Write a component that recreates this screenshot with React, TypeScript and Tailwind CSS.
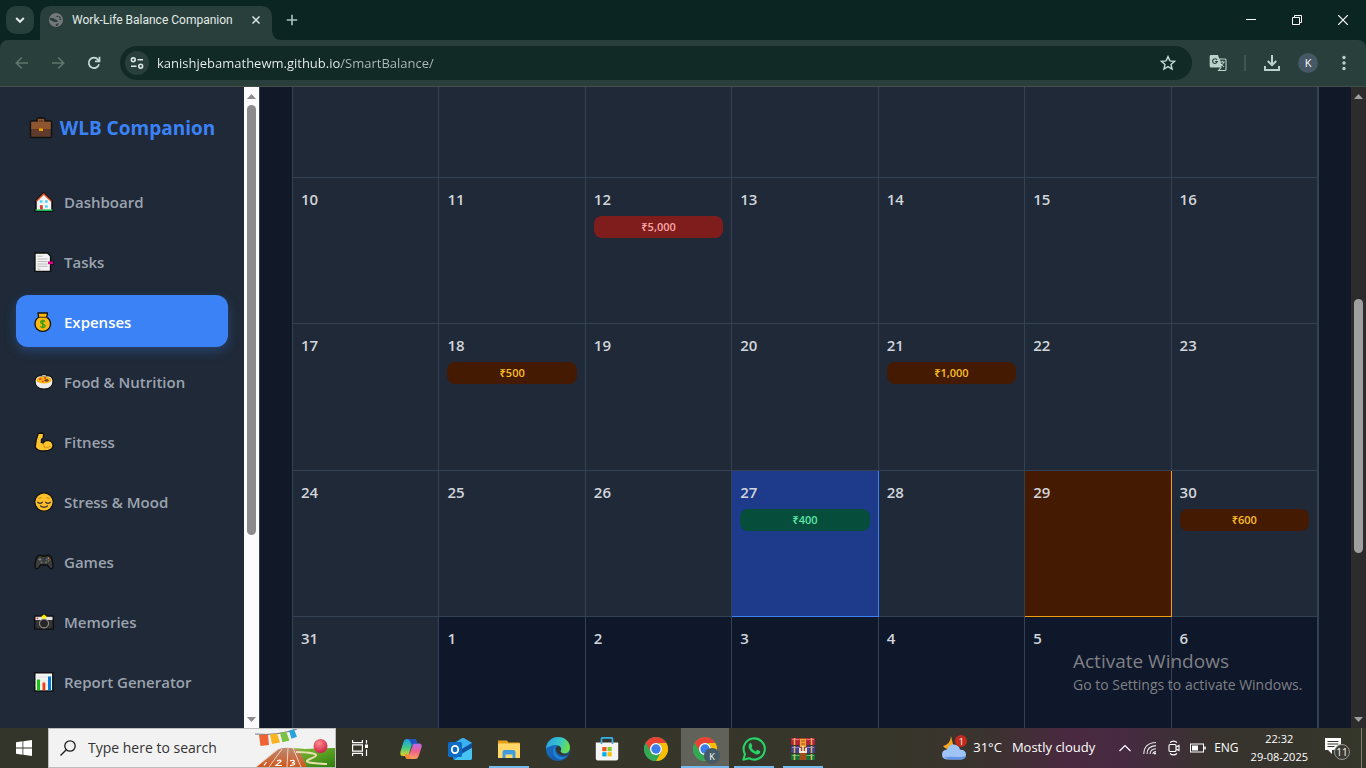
import React from "react";

type Tone = "red" | "amber" | "green";
type Day = {
  n: number | null;
  amount?: string;
  tone?: Tone;
  kind?: "today" | "selected" | "outside";
};

const weeks: Day[][] = [
  [10, 11, 12, 13, 14, 15, 16].map((n) => (n === 12 ? { n, amount: "₹5,000", tone: "red" as Tone } : { n })),
  [17, 18, 19, 20, 21, 22, 23].map((n) =>
    n === 18
      ? { n, amount: "₹500", tone: "amber" as Tone }
      : n === 21
        ? { n, amount: "₹1,000", tone: "amber" as Tone }
        : { n },
  ),
  [
    { n: 24 },
    { n: 25 },
    { n: 26 },
    { n: 27, amount: "₹400", tone: "green", kind: "selected" },
    { n: 28 },
    { n: 29, kind: "today" },
    { n: 30, amount: "₹600", tone: "amber" },
  ],
  [
    { n: 31 },
    { n: 1, kind: "outside" },
    { n: 2, kind: "outside" },
    { n: 3, kind: "outside" },
    { n: 4, kind: "outside" },
    { n: 5, kind: "outside" },
    { n: 6, kind: "outside" },
  ],
];

const chipTone: Record<Tone, string> = {
  red: "bg-[#7f1d1d] text-[#fca5a5]",
  amber: "bg-[#451a03] text-[#fbbf24]",
  green: "bg-[#064e3b] text-[#5ee6a8]",
};

const cellKind = {
  normal: "bg-[#1f2937] border-[#334155]",
  outside: "bg-[#0f172a] border-[#334155]",
  selected: "bg-[#1e3a8a] border-[#3b82f6]",
  today: "bg-[#451a03] border-[#f59e0b]",
};

/* ---------- sidebar icons ---------- */

const Briefcase = () => (
  <svg viewBox="0 0 24 24" className="size-6 shrink-0">
    <path d="M8 5V3.500Q8 2 9.500 2h5Q16 2 16 3.500V5h5.500q1 0 1 1v14.500q0 1-1 1h-19q-1 0-1-1V6q0-1 1-1z" fill="#603a2c" stroke="#111" strokeWidth="1.400" />
    <path d="M2.300 5.800h19.400V13H2.300z" fill="#8e562e" />
    <path d="M9.500 5.500V3.600h5v1.900" fill="none" stroke="#8e562e" strokeWidth="1.300" />
    <rect x="10" y="12.500" width="4" height="2.500" fill="#eaa300" />
  </svg>
);

const House = () => (
  <svg viewBox="0 0 20 20" className="size-5">
    <path d="M9.500 0.800 18 9v8.500h.7v1.800H1v-1.800h1V9z" fill="#f4f4f4" stroke="#0d0d0d" strokeWidth="1.500" strokeLinejoin="round" />
    <path d="M2.500 9.300 9.700 2l7.500 7.300" fill="none" stroke="#e8532b" strokeWidth="1.500" />
    <path d="M1.500 18.200h17" stroke="#1db954" strokeWidth="1.600" />
    <path d="M5.800 8.300h2.700v2.500H5.800zM11 8.300h2.700v2.500H11zM11 13.200h2.700v2.500H11z" fill="#4fd2f2" />
    <path d="M6 13.200h2.800v4.300H6z" fill="#e23b22" />
  </svg>
);

const Tabs = () => (
  <svg viewBox="0 0 20 20" className="size-5">
    <path d="M1 1h12.500L16.500 4v5.300h2.800v3h-2.800v7H1z" fill="#f3f3f3" stroke="#0d0d0d" strokeWidth="1.300" />
    <path d="M3.500 4.200h5M3.500 7h10M3.500 9.500h10M3.500 12h10M3.500 14.300h10M3.500 17h3" stroke="#b9b9b9" strokeWidth="1" />
    <path d="M14 9.500h5v2.700h-5z" fill="#e3008c" />
  </svg>
);

const MoneyBag = () => (
  <svg viewBox="0 0 20 20" className="size-5">
    <path d="M4 1h9.500l-.8 4.300C15 6.500 16.500 9 16.500 12c0 4.200-3.300 7.300-7.800 7.300S1 16.200 1 12c0-3 1.500-5.500 3.700-6.700z" fill="#fdb913" stroke="#111" strokeWidth="1.300" strokeLinejoin="round" />
    <path d="M4.800 5.300h7.800" stroke="#6b4a1c" strokeWidth="1.300" />
    <path d="M11.200 9.600C10.500 8.500 6.600 8.200 6.600 10.300c0 2.400 4.600 1.200 4.600 3.500 0 2.200-3.800 2-4.900.6M8.800 7.600v9" fill="none" stroke="#2e9b1b" strokeWidth="1.300" />
  </svg>
);

const Food = () => (
  <svg viewBox="0 0 20 20" className="size-5">
    <path d="M1 8.500Q1.500 4 7 3.500q3-2 6 0 5.500.5 6 5c.3 5-2.500 8.500-9 8.500S.7 13.500 1 8.500z" fill="#ececec" stroke="#111" strokeWidth="1.200" />
    <path d="M4.500 4.900Q10 2.500 15.500 4.900z" fill="#8e8e8e" />
    <ellipse cx="10" cy="8" rx="7.600" ry="3.500" fill="#fcb314" />
    <path d="M10 8.500q3-2.800 5 0-2 2.500-5 0z" fill="#7a4428" />
    <path d="M5 7h2.500M8 9.500h1.500M10 6h2" stroke="#e8401c" strokeWidth="1.300" />
  </svg>
);

const Biceps = () => (
  <svg viewBox="0 0 20 20" className="size-5">
    <path d="M4.300 1.300 8.500 1q1.400.6 1 2.600L9 6.500 7.600 7l-.3 3.500q1 .4 2 .6 1.200-2.800 4.500-2.800 4.600.4 5.300 5.200-.8 5.300-8.600 5.500Q3 19.200 1.200 15 1.600 8 4.300 1.300z" fill="#fdc52e" stroke="#111" strokeWidth="1.300" strokeLinejoin="round" />
    <path d="M9 12q1.500 2 1.500 3.500 4 .8 6-1.700" fill="none" stroke="#e29a14" strokeWidth="1.200" />
  </svg>
);

const Relieved = () => (
  <svg viewBox="0 0 20 20" className="size-5">
    <circle cx="10" cy="10" r="9.200" fill="#fdc02b" stroke="#111" strokeWidth="1.200" />
    <path d="M3.800 10.200q2.300 2.500 4.500 0M11.700 10.200q2.300 2.500 4.500 0M6.500 14q3.500 2.600 7 0" fill="none" stroke="#38322c" strokeWidth="1.300" strokeLinecap="round" />
    <path d="M4.500 6.500 7.500 5.500M12.500 5.500l3 1" stroke="#b9831d" strokeWidth="1" />
  </svg>
);

const Gamepad = () => (
  <svg viewBox="0 0 20 20" className="size-5">
    <path d="M5 3.500q1.500-.8 3 .5h4q1.500-1.300 3-.5 2.300.5 3.300 5.500 1.400 6.800-.3 7.700-1.800.8-4.500-3.700h-7Q3.800 17.500 2 16.700.3 15.800 1.700 9 2.700 4 5 3.500z" fill="#3c3c3c" stroke="#0c0c0c" strokeWidth="1.300" />
    <path d="M4.500 7.500h3M6 6v3" stroke="#888" strokeWidth=".9" />
    <circle cx="7.500" cy="10.500" r=".9" fill="#777" />
    <circle cx="12" cy="10.500" r=".9" fill="#777" />
    <circle cx="14.300" cy="6.300" r=".7" fill="#f5a623" />
    <circle cx="12.800" cy="7.600" r=".7" fill="#2d8cf0" />
    <circle cx="15.800" cy="7.800" r=".7" fill="#d64545" />
    <circle cx="14.300" cy="9" r=".7" fill="#3fb950" />
  </svg>
);

const Camera = () => (
  <svg viewBox="0 0 20 20" className="size-5">
    <path d="M.8 4.200H7L8 3h4l1 1.200h6.200v13H.8z" fill="#343434" stroke="#0b0b0b" strokeWidth="1.300" />
    <path d="M1.500 4.800h17V8h-17z" fill="#e3e3e3" />
    <circle cx="3.500" cy="6.300" r=".9" fill="#e5402a" />
    <circle cx="10" cy="11.500" r="4.500" fill="#262626" stroke="#a3a3a3" strokeWidth="1" />
    <path d="m10 2.300 1 1.200 1.500.2-.5 1.600.6 1.300H7.400L8 5.300l-.5-1.600L9 3.500z" fill="#fff100" />
  </svg>
);

const BarChart = () => (
  <svg viewBox="0 0 20 20" className="size-5">
    <rect x=".8" y=".8" width="18" height="18.200" fill="#f5f5f5" stroke="#0d0d0d" strokeWidth="1.400" />
    <path d="M1.500 5h16.600M1.500 9h16.600M1.500 13h16.600" stroke="#dcdcdc" strokeWidth=".8" />
    <path d="M3 7.500h3v10.800H3z" fill="#16c60c" />
    <path d="M8.500 10.500h2.800v7.800H8.500z" fill="#f03a17" />
    <path d="M14 4.500h3v13.800h-3z" fill="#0078d7" />
  </svg>
);

const nav = [
  { label: "Dashboard", Icon: House },
  { label: "Tasks", Icon: Tabs },
  { label: "Expenses", Icon: MoneyBag, active: true },
  { label: "Food & Nutrition", Icon: Food },
  { label: "Fitness", Icon: Biceps },
  { label: "Stress & Mood", Icon: Relieved },
  { label: "Games", Icon: Gamepad },
  { label: "Memories", Icon: Camera },
  { label: "Report Generator", Icon: BarChart },
];

/* ---------- browser chrome ---------- */

function TitleBar() {
  return (
    <header className="flex h-10 shrink-0 items-start bg-[#0b2622]">
      <button aria-label="Search tabs" className="mt-1.5 ml-1.5 grid size-7 shrink-0 place-items-center rounded-[10px] bg-[#28403b]">
        <svg viewBox="0 0 12 12" className="size-3" fill="none" stroke="#e3ebe8" strokeWidth="2">
          <path d="m2.200 4 3.800 3.800L9.800 4" />
        </svg>
      </button>
      <div className="mt-1.5 ml-1.5 flex h-[34px] w-[232px] items-center rounded-t-[10px] bg-[#293f3b] pr-2 pb-1.5 pl-2">
        <svg viewBox="0 0 16 16" className="size-4 shrink-0">
          <circle cx="8" cy="8" r="7" fill="#75787a" />
          <path d="M2 6h3.500q1 1.500 2.500 1.500t1.500 2.500H7Q5 10 4.500 9L2 8zM8.500 2.500l1 1L8 5h2l1.500-1 1.500 2-2 1q.5 1.500 2.500 1M7.500 12.500l3-1.500-.5 2.500-2 .5z" fill="#293f3b" />
        </svg>
        <span className="ml-2 grow font-[Roboto,sans-serif] text-xs whitespace-nowrap text-[#e2ebe8]">Work-Life Balance Companion</span>
        <button aria-label="Close tab" className="grid size-4 shrink-0 place-items-center">
          <svg viewBox="0 0 10 10" className="size-2.5" stroke="#dfe8e5" strokeWidth="1.500">
            <path d="m1.500 1.500 7 7m0-7-7 7" />
          </svg>
        </button>
      </div>
      <svg viewBox="0 0 10 10" className="size-2.5 shrink-0 self-end" fill="#293f3b">
        <path d="M0 0q0 10 10 10H0z" />
      </svg>
      <button aria-label="New tab" className="mt-1.5 grid h-7 w-5 place-items-center">
        <svg viewBox="0 0 12 12" className="size-3" stroke="#a9c4bd" strokeWidth="1.600">
          <path d="M6 .8v10.400M.8 6h10.400" />
        </svg>
      </button>
      <div className="ml-auto flex h-10">
        <button aria-label="Minimize" className="grid w-[46px] place-items-center">
          <svg viewBox="0 0 10 10" className="size-2.5" stroke="#fff"><path d="M0 4.500h10" /></svg>
        </button>
        <button aria-label="Restore" className="grid w-[46px] place-items-center">
          <svg viewBox="0 0 10 10" className="size-2.5" fill="none" stroke="#fff"><path d="M.5 2.500h7v7h-7zM2.500 2.500v-2h7v7h-2" /></svg>
        </button>
        <button aria-label="Close window" className="grid w-[46px] place-items-center">
          <svg viewBox="0 0 10 10" className="size-2.5" stroke="#fff" strokeWidth="1.200"><path d="m0 0 10 10M10 0 0 10" /></svg>
        </button>
      </div>
    </header>
  );
}

function Toolbar() {
  return (
    <div className="shrink-0 bg-[#0b2622]">
      <div className="flex h-[47px] items-center rounded-t-lg border-b border-[#454d47] bg-[#293f3b]">
        <button aria-label="Back" className="grid h-8 w-9 place-items-center pl-2">
          <svg viewBox="0 0 14 14" className="size-3.5" fill="none" stroke="#61756f" strokeWidth="1.600"><path d="M13 7H1.500m5.300-5.500L1.300 7l5.500 5.500" /></svg>
        </button>
        <button aria-label="Forward" className="grid h-8 w-9 place-items-center pl-2">
          <svg viewBox="0 0 14 14" className="size-3.5" fill="none" stroke="#61756f" strokeWidth="1.600"><path d="M1 7h11.500M7.200 1.500 12.700 7l-5.500 5.500" /></svg>
        </button>
        <button aria-label="Reload" className="grid h-8 w-9 place-items-center pl-2">
          <svg viewBox="0 0 14 14" className="size-3.5" fill="none" stroke="#c5dad4" strokeWidth="1.700"><path d="M12 8.200A5.200 5.200 0 1 1 11 3.600l1 1.200M12.500.8v4.500H8" /></svg>
        </button>
        <div className="ml-3 flex h-[34px] min-w-0 grow items-center rounded-full bg-[#122a26] pr-4 pl-[5px]">
          <button aria-label="View site information" className="grid size-6 shrink-0 place-items-center rounded-full bg-[#293f3b]">
            <svg viewBox="0 0 14 14" className="size-3.5" fill="none" stroke="#dbe7e3" strokeWidth="1.600">
              <circle cx="3.300" cy="3.800" r="1.900" /><path d="M7.500 3.800H13M1 10.200h5.500" /><circle cx="10.700" cy="10.200" r="1.900" />
            </svg>
          </button>
          <input
            aria-label="Address"
            defaultValue="kanishjebamathewm.github.io/SmartBalance/"
            className="ml-2 h-6 min-w-0 grow bg-[linear-gradient(90deg,#f0f5f3_184px,#aebfba_184px)] bg-clip-text text-[13px] text-transparent outline-none"
          />
          <button aria-label="Bookmark this page" className="grid size-4 place-items-center">
            <svg viewBox="0 0 16 16" className="size-4" fill="none" stroke="#c5dad4" strokeWidth="1.400"><path d="m8 1.600 1.900 4.300 4.700.4-3.600 3.100 1.100 4.600L8 11.600 3.900 14 5 9.400 1.400 6.300l4.700-.4z" /></svg>
          </button>
        </div>
        <button aria-label="Translate" className="ml-4 grid size-5 place-items-center">
          <svg viewBox="0 0 18 18" className="size-[18px]">
            <path d="M2 1h7l4 12.500H2q-1.300 0-1.300-1.300V2.300Q.7 1 2 1z" fill="#bcd3cc" />
            <path d="M8.200 5.800Q6.500 4 4.600 5.200q-1.900 1.700-.3 3.700 2.500 1.600 4-1.400H6" fill="none" stroke="#293f3b" strokeWidth="1.100" />
            <path d="M10.500 5h5.500q1 0 1 1v9.500q0 1-1 1H9.500l2.500-3z" fill="#293f3b" stroke="#bcd3cc" strokeWidth="1.100" />
            <path d="M10.800 8h5M13.300 6.800V8m1.500 0q-.8 3-3 4.200m-.2-3q1.300 2.400 3.400 3.800" fill="none" stroke="#bcd3cc" strokeWidth="1" />
          </svg>
        </button>
        <span className="mx-4 h-4 w-0.5 bg-[#40564f]" />
        <button aria-label="Downloads" className="ml-0.5 grid size-4 place-items-center">
          <svg viewBox="0 0 16 16" className="size-4" fill="none" stroke="#b9d3cc" strokeWidth="2"><path d="M8 0v10M3.800 6 8 10.200 12.200 6M1 11v4h14v-4" /></svg>
        </button>
        <button aria-label="Profile" className="ml-[18px] grid size-5 place-items-center rounded-full bg-[#465766] text-[11px] font-medium text-white">K</button>
        <button aria-label="Menu" className="mr-4 ml-5 grid h-6 w-3 place-items-center">
          <svg viewBox="0 0 4 16" className="h-4 w-1" fill="#b9d3cc"><circle cx="2" cy="2.500" r="1.700" /><circle cx="2" cy="8" r="1.700" /><circle cx="2" cy="13.500" r="1.700" /></svg>
        </button>
      </div>
    </div>
  );
}

/* ---------- page ---------- */

function Scrollbar({ light }: { light?: boolean }) {
  const fill = light ? "#8b8b8b" : "#9f9f9f";
  return (
    <div aria-hidden="true" className={light ? "flex w-[15px] shrink-0 flex-col bg-[#fcfcfc]" : "flex w-[15px] shrink-0 flex-col bg-[#2c2c2c]"}>
      <span className="grid h-[18px] shrink-0 place-items-center">
        <svg viewBox="0 0 9 5" className="h-[5px] w-[9px]" fill={fill}><path d="M0 5 4.500 0 9 5z" /></svg>
      </span>
      <div className="flex min-h-0 grow flex-col">
        {!light && <span className="h-[32%]" />}
        <span className={light ? "mx-auto h-[71%] w-[9px] rounded-full bg-[#8b8b8b]" : "mx-auto h-[42%] w-[9px] rounded-full bg-[#9f9f9f]"} />
      </div>
      <span className="grid h-[18px] shrink-0 place-items-center">
        <svg viewBox="0 0 9 5" className="h-[5px] w-[9px]" fill={fill}><path d="M0 0h9L4.500 5z" /></svg>
      </span>
    </div>
  );
}

function Sidebar() {
  return (
    <aside className="flex w-[260px] shrink-0 border-r border-[#334155] bg-[#1f2937]">
      <div className="min-w-0 grow overflow-hidden px-4">
        <h2 className="flex h-[88px] items-center justify-center gap-[7px] pb-1.5 text-[19px] font-bold whitespace-nowrap text-[#3b82f6]">
          <Briefcase />
          WLB Companion
        </h2>
        <nav>
          <ul className="flex flex-col gap-2">
            {nav.map(({ label, Icon, active }) => (
              <li key={label}>
                <a
                  href="#"
                  aria-current={active ? "page" : undefined}
                  className={
                    active
                      ? "flex h-[52px] items-center gap-2.5 rounded-xl bg-[#3b82f6] pt-0.5 pr-4 pl-[18px] text-[15px] font-semibold text-white shadow-[0_4px_12px_rgba(59,130,246,0.3)]"
                      : "flex h-[52px] items-center gap-2.5 rounded-xl pt-0.5 pr-4 pl-[18px] text-[15px] font-semibold text-[#9ca3af]"
                  }
                >
                  <Icon />
                  {label}
                </a>
              </li>
            ))}
          </ul>
        </nav>
      </div>
      <Scrollbar light />
    </aside>
  );
}

function Calendar() {
  return (
    <table aria-label="Expense calendar" className="block border-x border-[#334155]">
      <tbody className="grid grid-cols-7">
        <tr className="contents">
          {[3, 4, 5, 6, 7, 8, 9].map((n) => (
            <td key={n} className="h-[91px] border-r border-b border-[#334155] bg-[#1f2937] p-0" />
          ))}
        </tr>
        {weeks.map((week, i) => (
          <tr key={i} className="contents">
            {week.map((d) => (
              <td key={d.n} className={`block aspect-square border-r border-b p-2 ${cellKind[d.kind ?? "normal"]}`}>
                <div className="text-[15px] leading-[26px] font-semibold text-[#d1d5db]">{d.n}</div>
                {d.amount && d.tone && (
                  <div className={`mt-1 rounded-lg text-center text-[11px] leading-[22px] font-semibold ${chipTone[d.tone]}`}>{d.amount}</div>
                )}
              </td>
            ))}
          </tr>
        ))}
      </tbody>
    </table>
  );
}

/* ---------- taskbar ---------- */

const ChromeLogo = () => (
  <svg viewBox="0 0 24 24" className="size-6">
    <circle cx="12" cy="12" r="12" fill="#34a853" />
    <path d="M12 0a12 12 0 0 1 10.400 6H12a6 6 0 0 0-5.200 3L1.600 6A12 12 0 0 1 12 0z" fill="#ea4335" />
    <path d="M22.400 6A12 12 0 0 1 12 24l5.200-9a6 6 0 0 0 0-6L15 6z" fill="#fbbc04" />
    <path d="M1.600 6 6.800 15A6 6 0 0 1 12 6z" fill="#ea4335" />
    <path d="M1.600 6 6.800 15A6 6 0 0 0 12 18l2.500-.5L12 24A12 12 0 0 1 1.600 6z" fill="#34a853" />
    <circle cx="12" cy="12" r="6" fill="#fff" />
    <circle cx="12" cy="12" r="4.700" fill="#3b7de9" />
  </svg>
);

const Copilot = () => (
  <svg viewBox="0 0 24 24" className="size-6">
    <defs>
      <linearGradient id="cpA" x1="0" y1="0" x2="0" y2="1"><stop offset="0" stopColor="#1aa0e8" /><stop offset=".5" stopColor="#3fc98b" /><stop offset="1" stopColor="#e6d421" /></linearGradient>
      <linearGradient id="cpB" x1="0" y1="0" x2="0" y2="1"><stop offset="0" stopColor="#b86bf0" /><stop offset=".5" stopColor="#f0608f" /><stop offset="1" stopColor="#fba35b" /></linearGradient>
    </defs>
    <path d="M8 2h7q2 0 2.600 2L18.500 7H15q-2 0-2.600 2L10 17.500Q9.300 19 7.500 19H4Q.5 19 1.500 14.500L4.500 5Q5.500 2 8 2z" fill="url(#cpA)" />
    <path d="M16 22H9q-2 0-2.600-2L5.700 17.500H8.500q2 0 2.600-2L13.500 8.500Q14.200 6.500 16 6.500h4q3.500 0 2.500 4L19.500 19.500Q18.500 22 16 22z" fill="url(#cpB)" />
    <path d="M8 2h7q2 0 2.600 2l.9 2.700H15q-1.600 0-2.300 1.300L11 4Q10 2 8 2z" fill="#2450c8" />
    <path d="M5.700 17.500H9l2 3q1 1.500 2.500 1.500H9q-2 0-2.600-2z" fill="#f58c34" />
  </svg>
);

const Outlook = () => (
  <svg viewBox="0 0 24 24" className="size-6">
    <path d="M5 6.500 14 1.200q1-.5 2 0L24 6v15q0 2-2 2H7q-2 0-2-2z" fill="#1a86dc" />
    <path d="M9 4.500 14 1.200q1-.5 2 0L24 6 14 12z" fill="#3cb1f2" />
    <path d="M24 10v11q0 2-2 2H6z" fill="#46c5f4" />
    <path d="M24 6v5l-10 5V12z" fill="#114f9f" />
    <rect x="0" y="5" width="14" height="15" rx="1.500" fill="#0f6cc4" />
    <ellipse cx="7" cy="12.500" rx="3.200" ry="3.600" fill="none" stroke="#fff" strokeWidth="1.800" />
  </svg>
);

const Explorer = () => (
  <svg viewBox="0 0 24 24" className="size-6">
    <path d="M1 3.500h9l1.500 2H22q1 0 1 1V21H1z" fill="#e3a21a" />
    <path d="M1 6.500h22V21H1z" fill="#ffd868" />
    <path d="M5.500 21v-6q0-2 2-2h9q2 0 2 2v6h-3v-3.500h-7V21z" fill="#3f9be0" />
  </svg>
);

const Edge = () => (
  <svg viewBox="0 0 24 24" className="size-6">
    <defs>
      <linearGradient id="edA" x1="0" y1="0" x2="1" y2=".3"><stop offset="0" stopColor="#2a9be8" /><stop offset=".6" stopColor="#36c5c9" /><stop offset="1" stopColor="#6ade51" /></linearGradient>
      <linearGradient id="edB" x1="0" y1="0" x2="1" y2="1"><stop offset="0" stopColor="#1b74c9" /><stop offset="1" stopColor="#12519c" /></linearGradient>
    </defs>
    <circle cx="12" cy="12" r="12" fill="url(#edB)" />
    <path d="M0 11.500C.5 4.500 6 0 12 0c7 0 12 5 12 10.500 0 4-3 6-6 6s-4-1.300-3.600-2c1.800-2 .6-6.500-4.400-6.500-4.500 0-8 2-10 3.500z" fill="url(#edA)" />
    <path d="M9.500 9.300C5.500 12 6 20.500 14 22.700q4.500-.4 7.500-4-6 3.300-10.200-.7Q7.500 14 9.500 9.300z" fill="#2183d6" />
    <path d="M14.300 14.500c1.800-2 .5-5.500-2.800-5.500-2 1.500-2 5 0 7 3 3 7.500 3.500 11.300.6q-5.500 1.500-8.500-2.100z" fill="#33342a" />
  </svg>
);

const Store = () => (
  <svg viewBox="0 0 24 24" className="size-6">
    <path d="M6.500 7V2q0-1.200 1.200-1.200h8.600q1.200 0 1.200 1.200v5" fill="none" stroke="#35b3ee" strokeWidth="1.700" />
    <path d="M.8 5.500h22.400v16q0 2-2 2H2.800q-2 0-2-2z" fill="#f4f4f4" />
    <path d="M6.500 5.500v1.300M17.500 5.500v1.300" stroke="#1c86c8" strokeWidth="1.700" />
    <path d="M7.300 10h4.200v4.200H7.300z" fill="#f1511b" /><path d="M12.500 10h4.200v4.200h-4.200z" fill="#80cc28" />
    <path d="M7.300 15.200h4.200v4.200H7.300z" fill="#00adef" /><path d="M12.500 15.200h4.200v4.200h-4.200z" fill="#fbbc09" />
  </svg>
);

const WhatsApp = () => (
  <svg viewBox="0 0 24 24" className="size-6">
    <path d="M1.300 22.700 3 17.200A10.600 10.600 0 1 1 7 21.200z" fill="none" stroke="#25d366" strokeWidth="2.100" strokeLinejoin="round" />
    <path d="M7.300 6.800q1.400-1.600 2.200.2l.8 2q.2.700-.8 1.700 1.500 2.700 4.200 3.700l1.200-1.400q.4-.4 1 0l2 1q.8.500.2 1.800-1.400 2.400-4.400 1.400-5-1.700-7-6.400-.6-2.500.6-4z" fill="#25d366" />
  </svg>
);

const WinRar = () => (
  <svg viewBox="0 0 24 24" className="size-6">
    <rect x="0" y="1" width="24" height="7" rx="1" fill="#b8213d" /><path d="M1 2.500h22" stroke="#ef6d83" />
    <rect x="0" y="9" width="24" height="7" rx="1" fill="#423f95" /><path d="M1 10.500h22" stroke="#8886d6" />
    <rect x="0" y="17" width="24" height="6" rx="1" fill="#11733b" /><path d="M1 18.500h22" stroke="#4cbb75" />
    <path d="M3.500 1v22M20.500 1v22" stroke="#e0b84c" strokeWidth="1.500" strokeDasharray="7 1" />
    <path d="M8.500 1h7v22h-7z" fill="#a04c1c" />
    <path d="M9 2h6v8H9z" fill="#f0a43a" /><path d="M10 4h4M10 7h4" stroke="#a04c1c" />
    <path d="M9 11v4h6v-4" fill="none" stroke="#f3e9d2" strokeWidth="1.800" /><path d="M12 9v5" stroke="#f3e9d2" strokeWidth="1.500" />
  </svg>
);

const apps = [
  { name: "Copilot", Icon: Copilot },
  { name: "Outlook", Icon: Outlook },
  { name: "File Explorer", Icon: Explorer, open: true },
  { name: "Edge", Icon: Edge },
  { name: "Microsoft Store", Icon: Store },
  { name: "Chrome", Icon: ChromeLogo },
  { name: "Chrome (K)", Icon: ChromeLogo, open: true, active: true },
  { name: "WhatsApp", Icon: WhatsApp, open: true },
  { name: "WinRAR", Icon: WinRar, open: true },
];

function SearchArt() {
  return (
    <svg viewBox="0 0 80 38" className="h-[38px] w-20 shrink-0">
      <defs>
        <linearGradient id="track" x1="0" y1="0" x2="0" y2="1"><stop offset="0" stopColor="#b98b73" /><stop offset="1" stopColor="#d2571c" /></linearGradient>
        <linearGradient id="grass" x1="0" y1="0" x2="1" y2="1"><stop offset="0" stopColor="#8cc63c" /><stop offset="1" stopColor="#2f7d0d" /></linearGradient>
        <radialGradient id="ball" cx=".4" cy=".3" r=".8"><stop offset="0" stopColor="#ff8b8b" /><stop offset="1" stopColor="#c4153f" /></radialGradient>
      </defs>
      <path d="M30 21q8-3 20-1 15-1 30-1v19H38z" fill="url(#grass)" />
      <path d="M1 38 22 21q5-3 14-2l8 2 8 17z" fill="url(#track)" />
      <path d="M14 38 27 20M32 38 33 19M46 38 38 19M1 38l21-17" fill="none" stroke="#f2d3c2" strokeWidth="1" />
      <path d="M41 23q10 0 17 1.500t-2 5 2 4.500 14 1" fill="none" stroke="#e9dfb0" strokeWidth="2" />
      <path d="M0 5q22 2 42-5" fill="none" stroke="#555" strokeWidth=".8" />
      <path d="m4 6 9-.4 1 10.500-8.500 1z" fill="#ee6235" /><path d="m15 5.500 7-1 3 9-8 1.500z" fill="#f9b41f" />
      <path d="m25 4 6-1.500 3.500 9-7 1.800z" fill="#7cc242" /><path d="m34 1.800 5-1.500 3 7.500-5.500 2z" fill="#2aa3dc" />
      <path d="m11.500 33-2.500 3.500M22 32q4-2 4 .2L21 36.500h6M35 31.800q5-1.500 4 1.200l-2 .8q4 0 2 2l-4 .8" fill="none" stroke="#fff" strokeWidth="1.200" />
      <circle cx="65.500" cy="17" r="7" fill="url(#ball)" />
    </svg>
  );
}

function Taskbar() {
  return (
    <footer className="flex h-10 shrink-0 bg-[linear-gradient(90deg,#33342a_0%,#37362a_65%,#3a332f_72%,#49293f_78%,#472a42_82%,#37332e_89%,#35372b_100%)] text-white">
      <button aria-label="Start" className="grid w-12 shrink-0 place-items-center">
        <svg viewBox="0 0 16 16" className="size-4" fill="#fff"><path d="M0 2.200 6.500 1.300v6.200H0zM7.300 1.200 16 0v7.500H7.300zM0 8.400h6.500v6.300L0 13.800zM7.300 8.400H16V16l-8.700-1.200z" /></svg>
      </button>
      <label className="flex w-72 shrink-0 items-center border border-[#bdbdbd] bg-[#f2f2f2] pl-[11px]">
        <svg viewBox="0 0 16 16" className="size-4 shrink-0" fill="none" stroke="#1c1c1c" strokeWidth="1.300"><circle cx="10" cy="6" r="5.200" /><path d="M6.300 9.700.5 15.500" /></svg>
        <input aria-label="Search" placeholder="Type here to search" className="ml-3 w-0 min-w-0 grow bg-transparent text-sm text-[#333] outline-none placeholder:text-[#333]" />
        <SearchArt />
      </label>
      <div className="flex gap-px">
        <button aria-label="Task view" className="grid w-[50px] place-items-center pr-0.5">
          <svg viewBox="0 0 16 16" className="size-4" fill="none" stroke="#fff" strokeWidth="1.200"><path d="M.6 0v2.600h9.800V0M.6 16v-2.600h9.800V16M.6 4.800h9.800v6.400H.6zM14.500 0v3.500M14.500 9.500V16" /><path d="M13 4.500h3v3.500h-3z" fill="#fff" stroke="none" /></svg>
        </button>
        {apps.map(({ name, Icon, open, active }) => (
          <button
            key={name}
            aria-label={name}
            className={active ? "relative flex w-12 flex-col items-center bg-[#61635a]" : "relative flex w-12 flex-col items-center"}
          >
            <span className="grid h-[38px] place-items-center pt-1"><Icon /></span>
            {open && <span className={active ? "h-0.5 w-12 bg-[#76b9ed]" : "h-0.5 w-10 bg-[#76b9ed]"} />}
            {active && (
              <span className="absolute right-[9px] bottom-1 grid size-4 place-items-center rounded-full bg-[#455a64] text-[9px] leading-none">K</span>
            )}
          </button>
        ))}
      </div>
      <div className="ml-auto flex shrink-0 items-center text-[13px] whitespace-nowrap">
        <span className="relative">
          <svg viewBox="0 0 26 26" className="size-[26px]">
            <path d="M10 1q-.5 8-8 10 4 5 11 2.500Z" fill="#f5a623" />
            <path d="M6 24.500q-5-.5-5-5t5-5Q8 9 13 9.500q5 .5 6 5 6 .5 6 5t-5 5z" fill="#9fc3f5" />
            <path d="M3 22q3 2.500 8 2.500h9q4 0 5-4-3 2-9 1.500T3 22z" fill="#6394e6" />
          </svg>
          <span className="absolute top-0 right-0 grid size-3 place-items-center rounded-full bg-[#c42b1c] text-[9px] leading-none">1</span>
        </span>
        <span className="ml-1.5">31°C</span>
        <span className="ml-2.5">Mostly cloudy</span>
        <button aria-label="Show hidden icons" className="ml-6">
          <svg viewBox="0 0 12 8" className="h-2 w-3" fill="none" stroke="#fff" strokeWidth="1.200"><path d="M.5 7 6 1.500 11.500 7" /></svg>
        </button>
        <svg viewBox="0 0 14 14" className="ml-3 size-3.5" fill="none" stroke="#e5e5e5" strokeWidth="1.100">
          <path d="M.8 13Q1 2 13 1.500M4 13Q4 5 13 4.600M7 13q.3-5 6-5.300M9.800 13q.4-2.200 3.200-2.400" /><circle cx="12" cy="12.500" r="1" fill="#fff" stroke="none" />
        </svg>
        <svg viewBox="0 0 12 16" className="ml-[11px] h-4 w-3" fill="none" stroke="#fff" strokeWidth="1.100"><rect x="1" y="4.500" width="7" height="7" rx="1" /><path d="M8 7l3-1.500v5L8 9M2 2.500Q5.500-.3 9 2.500M2 13.500q3.500 2.800 7 0" /></svg>
        <svg viewBox="0 0 16 10" className="ml-2.5 h-2.5 w-4" fill="none" stroke="#fff"><rect x=".5" y="1" width="13" height="8" /><path d="M15 3.500v3" strokeWidth="1.500" /><path d="M2 2.500h6v5H2z" fill="#fff" stroke="none" /></svg>
        <span className="ml-2 text-xs">ENG</span>
        <div className="ml-3 text-center text-[11px] leading-[18px]">
          <div>22:32</div>
          <div>29-08-2025</div>
        </div>
        <button aria-label="Notifications" className="relative mr-[11px] ml-4">
          <svg viewBox="0 0 26 24" className="h-6 w-[26px]">
            <path d="M1 2h16v12H8v4l-4-4H1z" fill="#fff" /><path d="M3.500 5.500h11M3.500 8h11M3.500 10.500h7" stroke="#37372d" />
          </svg>
          <span className="absolute right-0 bottom-0 grid size-4 place-items-center rounded-full border border-[#999] bg-[#3c3c34] text-[10px] leading-none">11</span>
        </button>
        <span className="mr-1 h-10 w-px bg-[#7d7e75]" />
      </div>
    </footer>
  );
}

export default function App() {
  return (
    <div className="relative flex h-screen flex-col overflow-hidden bg-[#111827] font-['Open_Sans','Noto_Sans',sans-serif]">
      <TitleBar />
      <Toolbar />
      <div className="flex min-h-0 grow overflow-hidden">
        <Sidebar />
        <main className="min-w-0 grow overflow-hidden px-8">
          <Calendar />
        </main>
        <Scrollbar />
      </div>
      <Taskbar />
      <div className="pointer-events-none absolute right-0 bottom-[73px] w-[293px] text-[#a6a6a6]/75">
        <p className="text-[19px] leading-7">Activate Windows</p>
        <p className="text-sm leading-5">Go to Settings to activate Windows.</p>
      </div>
    </div>
  );
}
